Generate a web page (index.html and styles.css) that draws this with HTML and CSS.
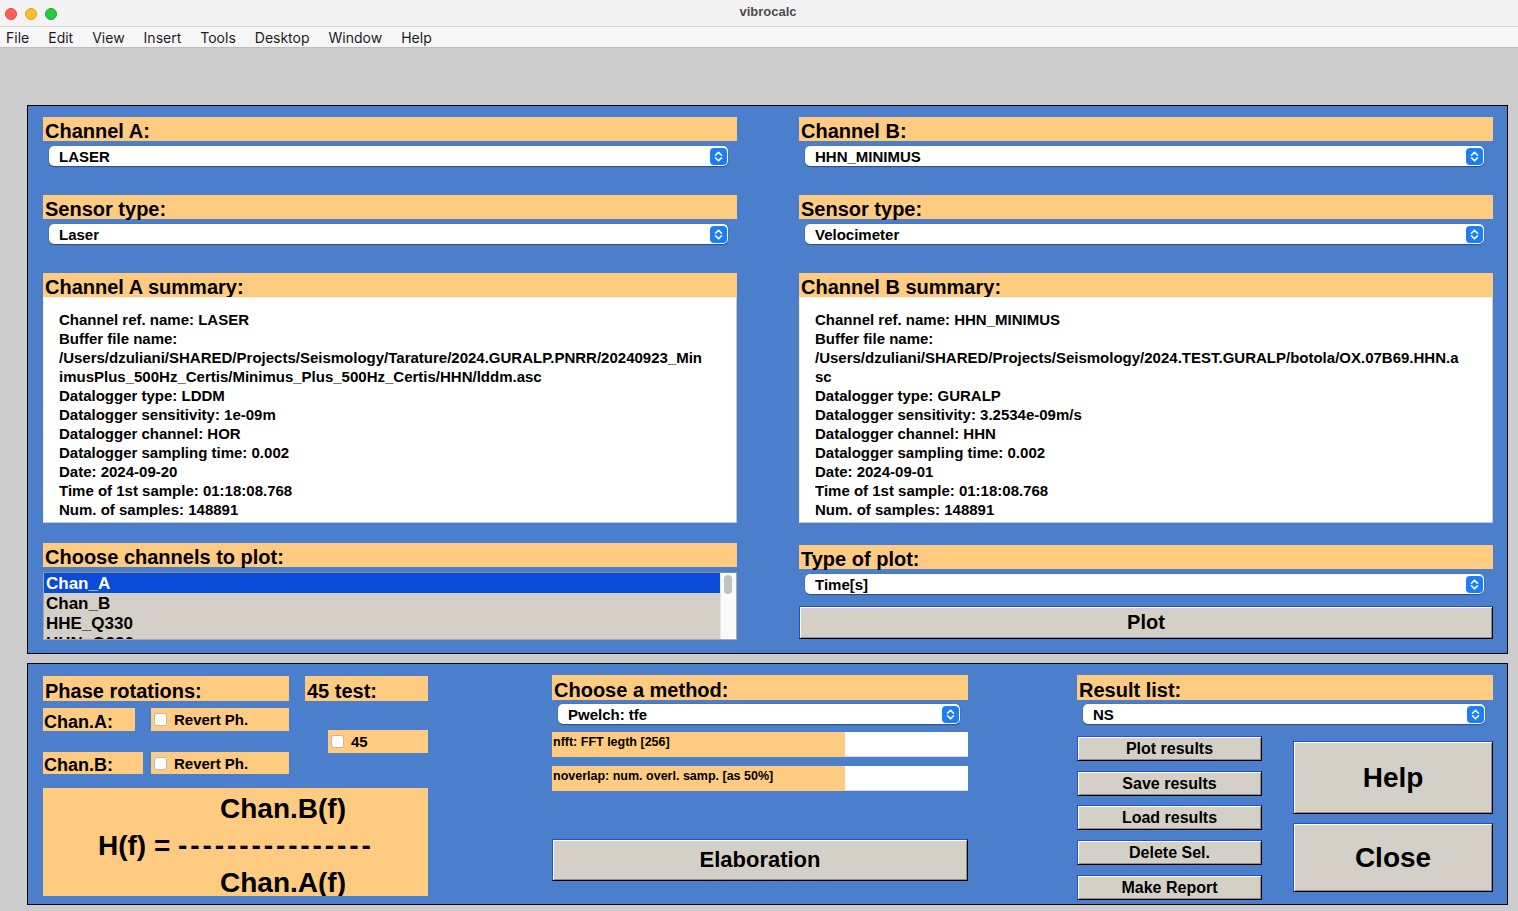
FILE: index.html
```html
<!DOCTYPE html>
<html>
<head>
<meta charset="utf-8">
<title>vibrocalc</title>
<link rel="stylesheet" href="styles.css">
</head>
<body>
<div class="titlebar">
  <div class="lights"><span class="dot red"></span><span class="dot yellow"></span><span class="dot green"></span></div>
  <div class="title">vibrocalc</div>
  <div></div>
</div>
<div class="menubar">
  <span>File</span><span>Edit</span><span>View</span><span>Insert</span><span>Tools</span><span>Desktop</span><span>Window</span><span>Help</span>
</div>
<div class="main">
  <div class="panel top-panel">
    <div class="col">
      <div class="label">Channel A:</div>
      <div class="select"><span>LASER</span><svg class="chev" viewBox="0 0 17 17" width="17" height="17"><rect x="0" y="0" width="17" height="17" rx="4" fill="#1b7ef7"/><path d="M5.5 7.2 L8.5 4.2 L11.5 7.2 M5.5 9.8 L8.5 12.8 L11.5 9.8" fill="none" stroke="#fff" stroke-width="1.6" stroke-linecap="round" stroke-linejoin="round"/></svg></div>
      <div class="label mt29">Sensor type:</div>
      <div class="select"><span>Laser</span><svg class="chev" viewBox="0 0 17 17" width="17" height="17"><rect x="0" y="0" width="17" height="17" rx="4" fill="#1b7ef7"/><path d="M5.5 7.2 L8.5 4.2 L11.5 7.2 M5.5 9.8 L8.5 12.8 L11.5 9.8" fill="none" stroke="#fff" stroke-width="1.6" stroke-linecap="round" stroke-linejoin="round"/></svg></div>
      <div class="label mt29">Channel A summary:</div>
      <div class="summary"><div class="summary-text">Channel ref. name: LASER
Buffer file name:
/Users/dzuliani/SHARED/Projects/Seismology/Tarature/2024.GURALP.PNRR/20240923_Min
imusPlus_500Hz_Certis/Minimus_Plus_500Hz_Certis/HHN/lddm.asc
Datalogger type: LDDM
Datalogger sensitivity: 1e-09m
Datalogger channel: HOR
Datalogger sampling time: 0.002
Date: 2024-09-20
Time of 1st sample: 01:18:08.768
Num. of samples: 148891</div></div>
      <div class="label mt20">Choose channels to plot:</div>
      <div class="list">
        <div class="list-items">
          <div class="item selected">Chan_A</div>
          <div class="item">Chan_B</div>
          <div class="item">HHE_Q330</div>
          <div class="item">HHN_Q330</div>
        </div>
        <div class="scrollbar"><div class="thumb"></div></div>
      </div>
    </div>
    <div class="col">
      <div class="label">Channel B:</div>
      <div class="select"><span>HHN_MINIMUS</span><svg class="chev" viewBox="0 0 17 17" width="17" height="17"><rect x="0" y="0" width="17" height="17" rx="4" fill="#1b7ef7"/><path d="M5.5 7.2 L8.5 4.2 L11.5 7.2 M5.5 9.8 L8.5 12.8 L11.5 9.8" fill="none" stroke="#fff" stroke-width="1.6" stroke-linecap="round" stroke-linejoin="round"/></svg></div>
      <div class="label mt29">Sensor type:</div>
      <div class="select"><span>Velocimeter</span><svg class="chev" viewBox="0 0 17 17" width="17" height="17"><rect x="0" y="0" width="17" height="17" rx="4" fill="#1b7ef7"/><path d="M5.5 7.2 L8.5 4.2 L11.5 7.2 M5.5 9.8 L8.5 12.8 L11.5 9.8" fill="none" stroke="#fff" stroke-width="1.6" stroke-linecap="round" stroke-linejoin="round"/></svg></div>
      <div class="label mt29">Channel B summary:</div>
      <div class="summary"><div class="summary-text">Channel ref. name: HHN_MINIMUS
Buffer file name:
/Users/dzuliani/SHARED/Projects/Seismology/2024.TEST.GURALP/botola/OX.07B69.HHN.a
sc
Datalogger type: GURALP
Datalogger sensitivity: 3.2534e-09m/s
Datalogger channel: HHN
Datalogger sampling time: 0.002
Date: 2024-09-01
Time of 1st sample: 01:18:08.768
Num. of samples: 148891</div></div>
      <div class="label mt22">Type of plot:</div>
      <div class="select"><span>Time[s]</span><svg class="chev" viewBox="0 0 17 17" width="17" height="17"><rect x="0" y="0" width="17" height="17" rx="4" fill="#1b7ef7"/><path d="M5.5 7.2 L8.5 4.2 L11.5 7.2 M5.5 9.8 L8.5 12.8 L11.5 9.8" fill="none" stroke="#fff" stroke-width="1.6" stroke-linecap="round" stroke-linejoin="round"/></svg></div>
      <div class="btn plot-btn">Plot</div>
    </div>
  </div>

  <div class="panel bottom-panel">
    <div class="group1">
      <div class="row1">
        <div class="label h25 w246">Phase rotations:</div>
        <div class="label h25 w123 ml16">45 test:</div>
      </div>
      <div class="middle">
        <div class="sub-left">
          <div class="rowA">
            <div class="label small w92 h23">Chan.A:</div>
            <div class="check-box w138 h23 ml16"><span class="cb"></span><span>Revert Ph.</span></div>
          </div>
          <div class="rowB">
            <div class="label small w100 h22">Chan.B:</div>
            <div class="check-box w138 h22 ml8"><span class="cb"></span><span>Revert Ph.</span></div>
          </div>
        </div>
        <div class="check-box box45"><span class="cb"></span><span>45</span></div>
      </div>
      <div class="formula">
        <div class="f1">Chan.B(f)</div>
        <div class="f2">H(f) = <span class="dashes">----------------</span></div>
        <div class="f1">Chan.A(f)</div>
      </div>
    </div>

    <div class="group2">
      <div class="label h25">Choose a method:</div>
      <div class="select sel-b"><span>Pwelch: tfe</span><svg class="chev" viewBox="0 0 17 17" width="17" height="17"><rect x="0" y="0" width="17" height="17" rx="4" fill="#1b7ef7"/><path d="M5.5 7.2 L8.5 4.2 L11.5 7.2 M5.5 9.8 L8.5 12.8 L11.5 9.8" fill="none" stroke="#fff" stroke-width="1.6" stroke-linecap="round" stroke-linejoin="round"/></svg></div>
      <div class="param mt8"><div class="param-label">nfft: FFT legth [256]</div><div class="param-input"></div></div>
      <div class="param mt9"><div class="param-label">noverlap: num. overl. samp. [as 50%]</div><div class="param-input"></div></div>
      <div class="btn elab-btn">Elaboration</div>
    </div>

    <div class="group3">
      <div class="label h25">Result list:</div>
      <div class="select sel-b"><span>NS</span><svg class="chev" viewBox="0 0 17 17" width="17" height="17"><rect x="0" y="0" width="17" height="17" rx="4" fill="#1b7ef7"/><path d="M5.5 7.2 L8.5 4.2 L11.5 7.2 M5.5 9.8 L8.5 12.8 L11.5 9.8" fill="none" stroke="#fff" stroke-width="1.6" stroke-linecap="round" stroke-linejoin="round"/></svg></div>
      <div class="actions">
        <div class="small-btns">
          <div class="btn sbtn m12">Plot results</div>
          <div class="btn sbtn m10">Save results</div>
          <div class="btn sbtn m9">Load results</div>
          <div class="btn sbtn m10">Delete Sel.</div>
          <div class="btn sbtn m10">Make Report</div>
        </div>
        <div class="big-btns">
          <div class="btn help-btn">Help</div>
          <div class="btn close-btn">Close</div>
        </div>
      </div>
    </div>
  </div>
</div>
</body>
</html>
```

FILE: styles.css
```css
* { box-sizing: border-box; }
html, body { margin: 0; padding: 0; }
body {
  width: 1518px;
  height: 911px;
  overflow: hidden;
  background: #cccccc;
  font-family: "Liberation Sans", Arial, Helvetica, sans-serif;
  color: #000;
}

/* window chrome */
.titlebar {
  height: 27px;
  background: #f4f3f4;
  border-bottom: 1px solid #d8d7d8;
  display: grid;
  grid-template-columns: 1fr auto 1fr;
  align-items: center;
}
.lights { display: flex; gap: 8px; padding-left: 5px; padding-top: 1px; }
.dot { width: 12px; height: 12px; border-radius: 50%; display: block; }
.red { background: #fe5f57; border: 0.5px solid #e0443e; }
.yellow { background: #febc2e; border: 0.5px solid #dea123; }
.green { background: #28c840; border: 0.5px solid #1aab29; }
.title {
  font-weight: bold;
  font-size: 13px;
  color: #4b4b4b;
  padding-left: 18px;
  padding-bottom: 3px;
}
.menubar {
  height: 21px;
  background: #f7f6f7;
  border-bottom: 1px solid #bcbcbc;
  display: flex;
  align-items: center;
  gap: 19px;
  padding-left: 6px;
  font-family: Inter, "Liberation Sans", sans-serif;
  font-size: 14px;
  color: #1c1c1c;
}

.main { padding: 57px 0 0 27px; }

.panel {
  background: #4b7fcc;
  border: 1px solid #000;
  width: 1481px;
}
.top-panel {
  height: 549px;
  padding: 11px 14px 0 15px;
  display: flex;
  gap: 62px;
}
.bottom-panel {
  margin-top: 9px;
  height: 242px;
  padding: 11px 14px 0 15px;
  display: flex;
}

.col { width: 694px; display: flex; flex-direction: column; }

.label {
  background: #fecb80;
  height: 24px;
  font-size: 20px;
  font-weight: bold;
  line-height: 20px;
  display: flex;
  align-items: flex-end;
  padding-left: 2px;
  white-space: nowrap;
  flex-shrink: 0;
}
.label.small { font-size: 18px; line-height: 18px; padding-left: 1px; }
.mt29 { margin-top: 29px; }
.mt22 { margin-top: 22px; }
.mt20 { margin-top: 20px; }
.mt8 { margin-top: 8px; }
.mt9 { margin-top: 9px; }
.h25 { height: 25px; }
.h23 { height: 23px; }
.h22 { height: 22px; }
.w246 { width: 246px; }
.w123 { width: 123px; }
.w92 { width: 92px; }
.w100 { width: 100px; }
.w138 { width: 138px; }
.ml16 { margin-left: 16px; }
.ml8 { margin-left: 8px; }

.select {
  margin: 5px 9px 0 6px;
  height: 20px;
  background: #fff;
  border-radius: 5px;
  box-shadow: 0 1px 1px rgba(0, 0, 0, 0.35), 0 0 0 0.5px rgba(0, 0, 0, 0.12);
  display: flex;
  align-items: center;
  justify-content: space-between;
  padding: 1px 1px 0 10px;
  font-size: 15px;
  font-weight: bold;
  flex-shrink: 0;
}
.sel-b { margin: 4px 8px 0 6px; }
.chev { display: block; margin-top: -1px; }

.summary {
  height: 226px;
  background: #fff;
  border: 1px solid #c9c9c9;
  border-top-color: #f0f0f0;
  border-left-color: #f0f0f0;
  padding: 12px 0 0 15px;
  flex-shrink: 0;
}
.summary-text {
  height: 207px;
  overflow: hidden;
  white-space: pre;
  font-size: 15px;
  font-weight: bold;
  line-height: 19px;
}

.list {
  margin-top: 5px;
  height: 68px;
  border: 1px solid #a8a8a8;
  border-top-color: #8c8c8c;
  background: #d4d0c8;
  display: flex;
  overflow: hidden;
}
.list-items { flex: 1; overflow: hidden; }
.item {
  height: 20px;
  line-height: 21px;
  font-size: 17px;
  font-weight: bold;
  padding-left: 2px;
}
.item.selected { background: #0a4cd7; color: #fff; }
.scrollbar {
  width: 16px;
  background: #fafafa;
  border-left: 1px solid #e6e6e6;
  padding: 2px 0 0 3px;
}
.thumb { width: 8px; height: 19px; background: #c1c1c1; border-radius: 4px; }

.btn {
  background: #d4d0c8;
  border: 1px solid;
  border-color: #2350d6 #000 #000 #2350d6;
  box-shadow: inset 1px 1px 0 #fff, inset -1px -1px 0 #8d8d8d;
  font-weight: bold;
  display: flex;
  align-items: center;
  justify-content: center;
  flex-shrink: 0;
}
.plot-btn { margin-top: 12px; height: 33px; font-size: 20px; }

/* bottom panel groups */
.group1 { width: 385px; padding-top: 1px; }
.row1 { display: flex; }
.middle { display: flex; height: 73px; }
.sub-left { width: 246px; }
.rowA { display: flex; margin-top: 7px; }
.rowB { display: flex; margin-top: 21px; }
.check-box {
  background: #fecb80;
  display: flex;
  align-items: center;
  font-size: 15px;
  font-weight: bold;
}
.cb {
  width: 13px;
  height: 13px;
  background: #fff;
  border: 1px solid #b8b8b8;
  border-radius: 3px;
  margin: 0 7px 0 3px;
  display: block;
  flex-shrink: 0;
}
.box45 { width: 100px; height: 23px; margin: 29px 0 0 39px; }
.formula {
  margin-top: 14px;
  height: 108px;
  background: #fecb80;
  overflow: hidden;
  padding-top: 2px;
  font-size: 28px;
  font-weight: bold;
  line-height: 37px;
  white-space: nowrap;
}
.f1 { padding-left: 177px; }
.f2 { padding-left: 55px; }
.dashes { letter-spacing: 2.9px; }

.group2 { width: 416px; margin-left: 124px; display: flex; flex-direction: column; }
.param { display: flex; height: 25px; }
.param-label {
  width: 293px;
  background: #fecb80;
  font-size: 12.5px;
  font-weight: bold;
  line-height: 15px;
  padding: 3px 0 0 1px;
  white-space: nowrap;
}
.param-input {
  flex: 1;
  background: #fff;
  border-bottom: 1px solid #d8d8d8;
}
.elab-btn { margin-top: 48px; height: 42px; font-size: 22px; }

.group3 { width: 416px; margin-left: 109px; display: flex; flex-direction: column; }
.actions { display: flex; }
.small-btns { width: 185px; display: flex; flex-direction: column; }
.sbtn { height: 25px; font-size: 16px; }
.m12 { margin-top: 12px; }
.m10 { margin-top: 10px; }
.m9 { margin-top: 9px; }
.big-btns { width: 200px; margin-left: 31px; display: flex; flex-direction: column; }
.help-btn { margin-top: 17px; height: 73px; font-size: 28px; }
.close-btn { margin-top: 9px; height: 69px; font-size: 28px; }
```
